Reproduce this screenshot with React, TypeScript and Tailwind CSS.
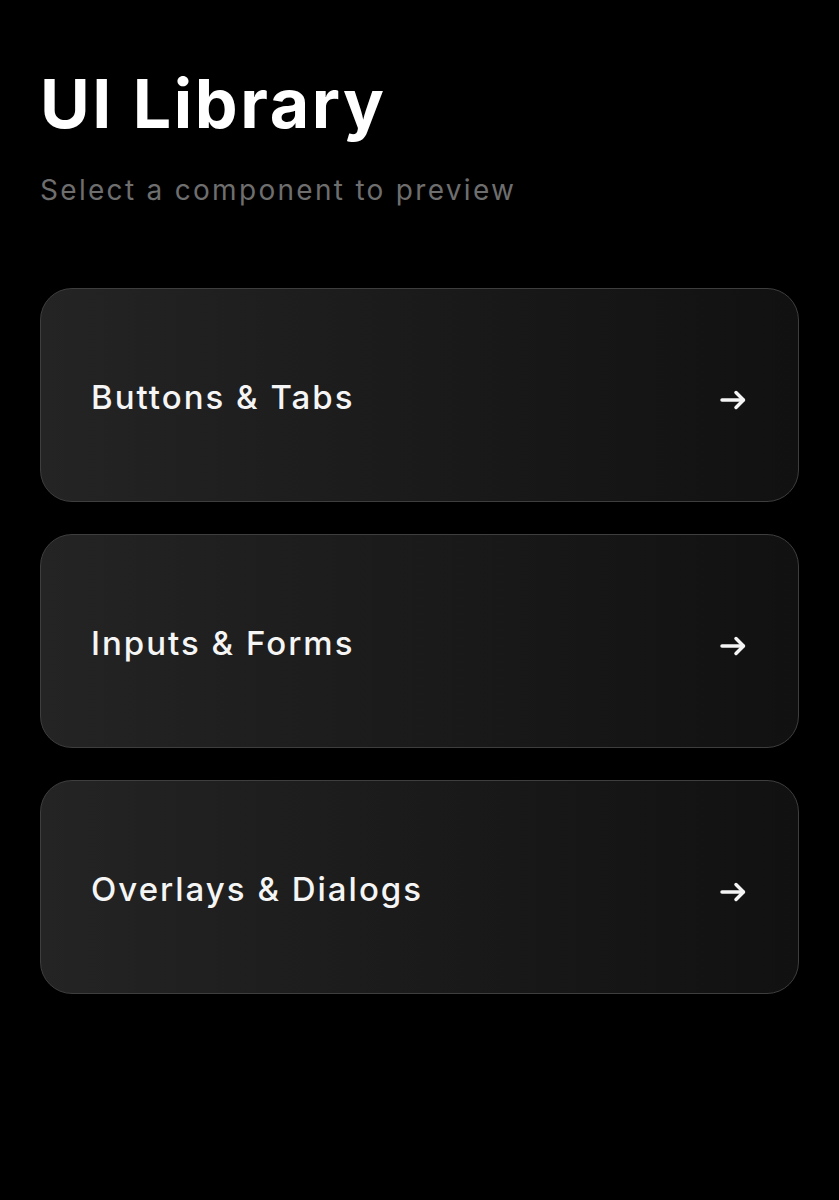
const items = ["Buttons & Tabs", "Inputs & Forms", "Overlays & Dialogs"];

function Arrow() {
  return (
    <svg width="28" height="24" viewBox="0 0 28 24" fill="none" className="mt-[9px] shrink-0">
      <path d="M2 12h21" stroke="#f5f5f5" strokeWidth="3.5" strokeLinecap="round" />
      <path d="M16 4.5l7.5 7.5-7.5 7.5" stroke="#f5f5f5" strokeWidth="3.5" strokeLinecap="round" strokeLinejoin="round" />
    </svg>
  );
}

export default function App() {
  return (
    <div className="min-h-[1200px] bg-black px-10 pt-[62px] font-['Inter',sans-serif] text-white">
      {/* Header */}
      <h1 className="text-[68px] font-bold leading-[82px] tracking-[2.6px]">UI Library</h1>
      <p className="mt-[28px] text-[28px] leading-[36px] tracking-[2.3px] text-[#6e6e6e]">Select a component to preview</p>

      {/* Component list */}
      <div className="mt-[80px] flex flex-col gap-[32px]">
        {items.map((label) => (
          <button
            key={label}
            className="flex h-[214px] w-[759px] items-center justify-between rounded-[32px] border border-[#3e3e3e] bg-linear-to-r from-[#242424] to-[#111111] pl-[50px] pr-[50px] text-left"
          >
            <span className="mt-[5px] text-[33px] font-medium tracking-[2px] text-[#f5f5f5]">{label}</span>
            <Arrow />
          </button>
        ))}
      </div>
    </div>
  );
}
